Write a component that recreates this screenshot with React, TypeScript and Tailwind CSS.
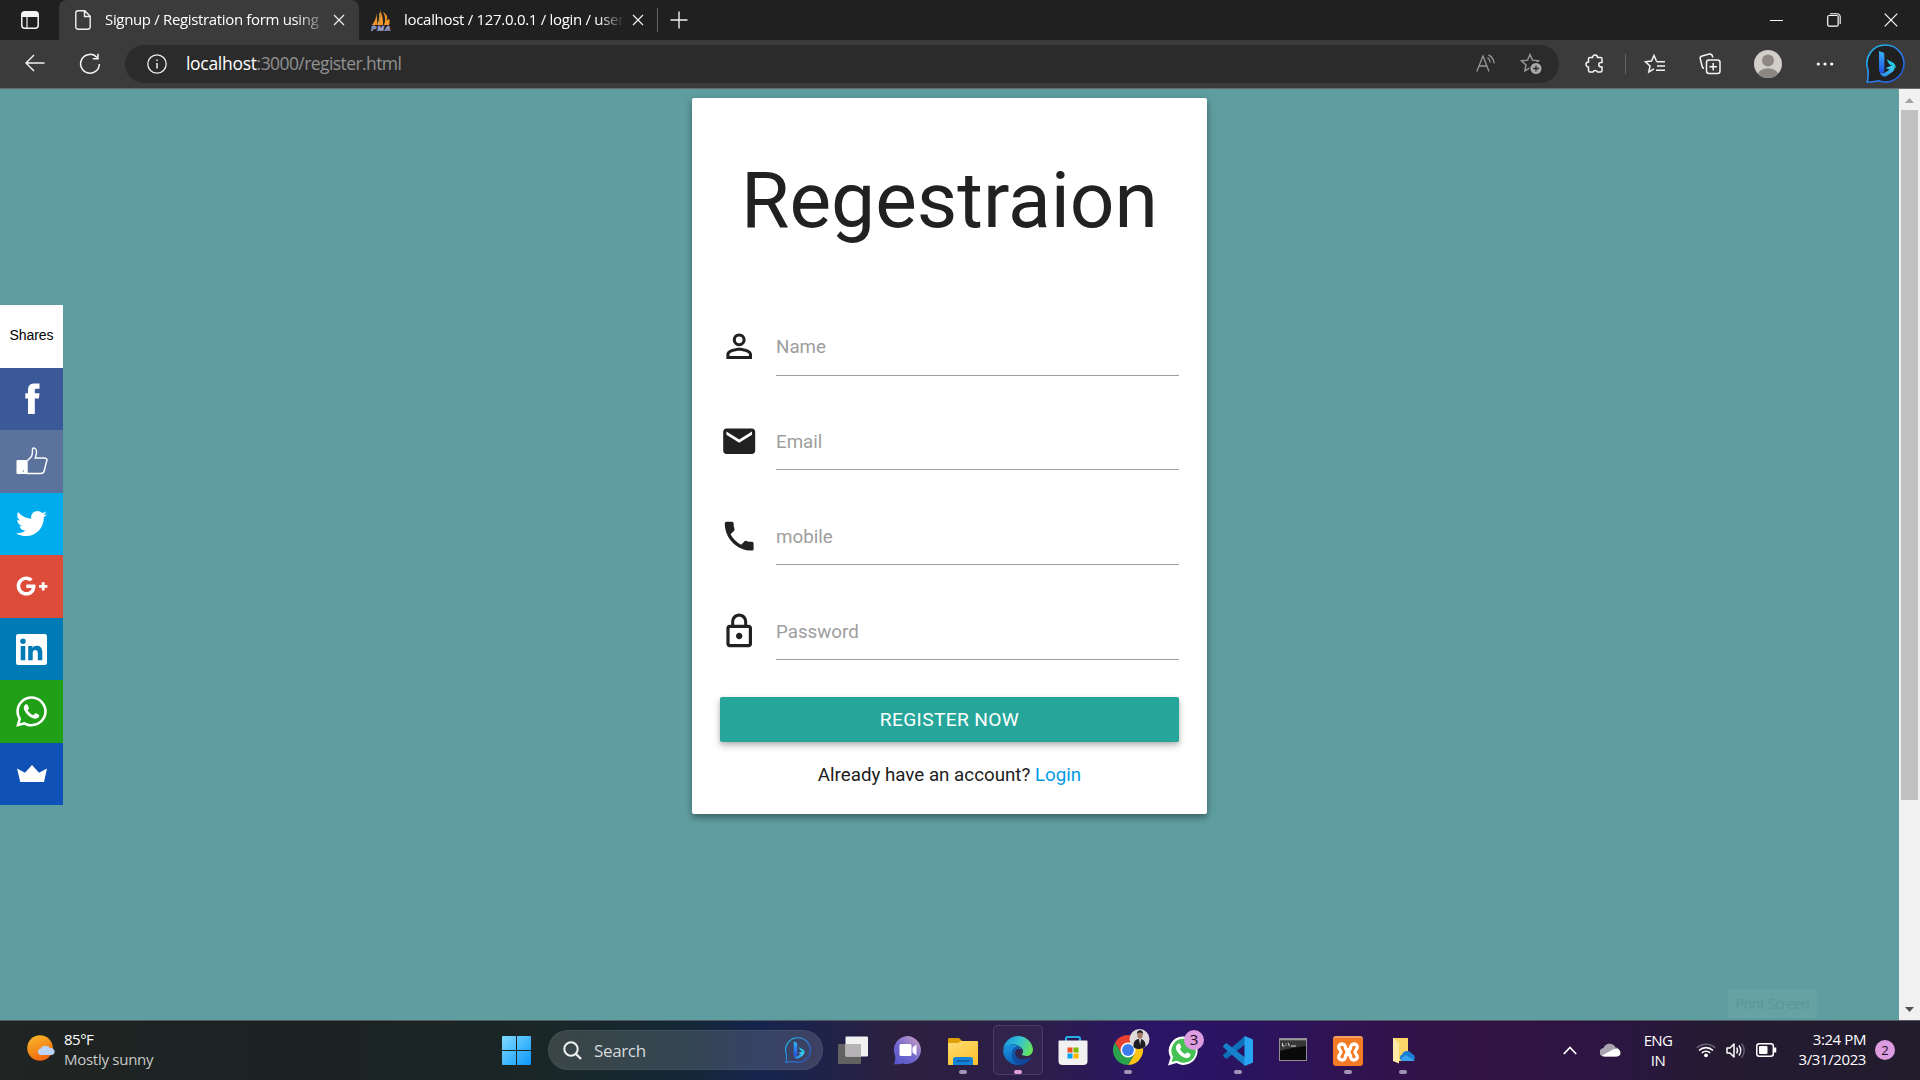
import React from "react";
import { FaTwitter, FaGooglePlusG, FaWhatsapp } from "react-icons/fa";

const UI = "font-['Open_Sans','Noto_Sans',sans-serif]";

function BingMark({ id, size, fill }: { id: string; size: number; fill: string }) {
  return (
    <svg width={size} height={size} viewBox="0 0 38 38" className="shrink-0">
      <defs>
        <linearGradient id={id + "r"} x1="0" y1="0" x2="1" y2="1">
          <stop offset="0" stopColor="#1fc4e8" />
          <stop offset="0.5" stopColor="#2a86ee" />
          <stop offset="1" stopColor="#1d4fd0" />
        </linearGradient>
        <linearGradient id={id + "b"} x1="0" y1="0" x2="0" y2="1">
          <stop offset="0" stopColor="#37b4f4" />
          <stop offset="1" stopColor="#1f4fe6" />
        </linearGradient>
        <linearGradient id={id + "c"} x1="0" y1="1" x2="1" y2="0">
          <stop offset="0" stopColor="#2b7bf0" />
          <stop offset="1" stopColor="#3ee0ee" />
        </linearGradient>
      </defs>
      <path d="M19 1A18 18 0 1 1 12.500 35.800C9 36.600 5 37 1 37C2.600 33.500 2.400 30.500 1.900 25A18 18 0 0 1 19 1Z" fill={fill} stroke={`url(#${id}r)`} strokeWidth="1.600" />
      <path d="M19 23.500l8-3.200c1.600 2.400.8 5.600-1.600 7.300l-5.400 3.500c-2 1.300-6 .3-6.400-3.300l3.200.6c.8 0 1.500-.3 2.200-.8l4-2.600z" fill={`url(#${id}c)`} />
      <path d="M12.700 6.700l4 1.500c.7.3 1.200.9 1.200 1.700V25c0 2-1 3.400-2.600 3.400s-2.600-1.400-2.600-3.200z" fill={`url(#${id}b)`} />
      <path d="M20 14.800l5.800 3c2.300 1.200 3.600 3.600 3.200 6.200-.6-1.300-1.300-2-2.300-2.400l-3.200-1.500c-.7-.3-1.200-.8-1.500-1.500z" fill="#22c6e8" />
    </svg>
  );
}

function CloseX() {
  return (
    <svg width="12" height="12" viewBox="0 0 12 12" className="shrink-0">
      <path d="M1 1l10 10M11 1L1 11" stroke="#f0f0f0" strokeWidth="1.200" fill="none" />
    </svg>
  );
}

function TabStrip() {
  return (
    <div className="flex h-10 items-stretch bg-[#202020]">
      <div className="flex w-[59px] items-center">
        <svg width="18" height="18" viewBox="0 0 18 18" className="ml-[21px]">
          <rect x="0.800" y="0.800" width="16.400" height="16.400" rx="3" fill="none" stroke="#f4f4f4" strokeWidth="1.500" />
          <path d="M1 5V3a2 2 0 0 1 2-2h12a2 2 0 0 1 2 2v3H1z" fill="#f4f4f4" />
          <path d="M6 6v11" stroke="#f4f4f4" strokeWidth="1.200" />
        </svg>
      </div>
      <div className="flex w-[300px] items-center rounded-t-[8px] bg-[#3b3b3b]">
        <svg width="16" height="20" viewBox="0 0 16 20" className="ml-4 shrink-0">
          <path d="M3 .8h6.800l5.400 5.400V17a2.200 2.200 0 0 1-2.200 2.200H3A2.200 2.200 0 0 1 .8 17V3A2.200 2.200 0 0 1 3 .8zM9.500 1v5.500H15" fill="none" stroke="#f0f0f0" strokeWidth="1.400" />
        </svg>
        <div className="mb-[2px] ml-[14px] w-[220px] whitespace-nowrap text-[15px] leading-5 tracking-[-0.34px] text-white [mask-image:linear-gradient(to_right,black_190px,transparent_224px)]">
          Signup / Registration form using
        </div>
        <div className="ml-[8px] flex"><CloseX /></div>
      </div>
      <div className="flex w-[298px] items-center">
        <svg width="20" height="21" viewBox="0 0 20 21" className="ml-[12px] shrink-0">
          <path d="M5.500 3C5.500 8 3.500 12 1 15h5.500zM9 0c.8 6 .2 11-2.500 15H12C12.300 10 11.500 5 9 0zM12 2c2.500 4 2.800 8 1 13h5c.8-2 .8-4 .2-6l-3 1.500C17.500 7 15.500 4 12 2z" fill="#f3962a" />
          <path d="M8.700 3c0 5-.5 8-1.500 11" stroke="#fbc65a" strokeWidth="0.800" fill="none" />
          <text x="0" y="20.500" fontSize="8" fontWeight="700" fontStyle="italic" fontFamily="Liberation Sans" fill="#4b5590" stroke="#b9bee0" strokeWidth="0.500" textLength="19.500">PMA</text>
        </svg>
        <div className="mb-[2px] ml-[13px] w-[230px] whitespace-nowrap text-[15px] leading-5 tracking-[-0.3px] text-white [mask-image:linear-gradient(to_right,black_195px,transparent_220px)]">
          localhost / 127.0.0.1 / login / user
        </div>
        <div className="-ml-[2px] flex"><CloseX /></div>
      </div>
      <div className="mt-2 h-6 w-px bg-[#636363]" />
      <svg width="18" height="18" viewBox="0 0 18 18" className="ml-[12px] mt-[11px]">
        <path d="M9 .5v17M.5 9h17" stroke="#f0f0f0" strokeWidth="1.400" />
      </svg>
      <div className="ml-auto flex items-center pr-[22px]">
        <div className="h-px w-[13px] bg-white" />
        <svg width="14" height="14" viewBox="0 0 14 14" className="ml-[44px]">
          <rect x="0.700" y="2.500" width="10.500" height="10.700" rx="1.500" fill="none" stroke="#fff" strokeWidth="1.200" />
          <path d="M3 .8h7a3 3 0 0 1 3.200 3V11" fill="none" stroke="#fff" strokeWidth="1.100" />
        </svg>
        <svg width="14" height="14" viewBox="0 0 14 14" className="ml-[43px]">
          <path d="M.7.700l12.600 12.600M13.300.700L.7 13.300" stroke="#fff" strokeWidth="1.200" />
        </svg>
      </div>
    </div>
  );
}

const STAR = "M10 1.500l2.500 5.600 6 .7-4.500 4.100 1.200 6L10 14.900 4.800 17.900 6 11.900 1.500 7.800l6-.7z";

function AddressBar() {
  return (
    <div className="flex h-[49px] items-center border-b border-[#6a6a6a] bg-[#3b3b3b]">
      <svg width="20" height="18" viewBox="0 0 20 18" className="mb-[2px] ml-[25px]">
        <path d="M19.500 9H1M9 1L1 9l8 8" fill="none" stroke="#f4f4f4" strokeWidth="1.400" />
      </svg>
      <svg width="22" height="22" viewBox="0 0 22 22" className="mb-[1px] ml-[34px]">
        <path d="M18 4.500A9.400 9.400 0 1 0 20.400 11M19 .8v5h-5.200" fill="none" stroke="#f4f4f4" strokeWidth="1.500" />
      </svg>
      <div className="ml-[24px] flex h-[38px] w-[1434px] items-center rounded-full bg-[#2b2b2b]">
        <svg width="20" height="20" viewBox="0 0 20 20" className="ml-[22px]">
          <circle cx="10" cy="10" r="9.200" fill="none" stroke="#f0f0f0" strokeWidth="1.300" />
          <path d="M10 9v5.500M10 5.500v1.600" stroke="#f0f0f0" strokeWidth="1.500" />
        </svg>
        <div className="mb-[2px] ml-[19px] whitespace-nowrap text-[17.5px] leading-6 tracking-[-0.58px] text-[#929292]">
          <span className="tracking-[-0.3px] text-white">localhost</span>:3000/register.html
        </div>
        <svg width="20" height="18" viewBox="0 0 20 18" className="mb-[2px] ml-auto">
          <path d="M.8 17.500L7 2l6 15.500M3 12h8M11.500 3.500q2.500 1.800 2.800 5M12.500.8q5 2.500 5.700 8.500" fill="none" stroke="#989898" strokeWidth="1.300" />
        </svg>
        <svg width="22" height="22" viewBox="0 0 22 22" className="ml-[24px] mr-[17px]">
          <path d={STAR} fill="none" stroke="#989898" strokeWidth="1.400" />
          <circle cx="16" cy="15.500" r="6.600" fill="#2b2b2b" />
          <circle cx="16" cy="15.500" r="5.500" fill="#a8a8a8" />
          <path d="M16 12.500v6M13 15.500h6" stroke="#2b2b2b" strokeWidth="1.300" />
        </svg>
      </div>
      <svg width="20" height="20" viewBox="0 0 20 20" className="mb-[1px] ml-[25px]">
        <path d="M6 3.500H8.500a2.500 2.500 0 0 1 5 0h3A1.500 1.500 0 0 1 18 5v3.500h-1a2.200 2.200 0 0 0 0 4.400h1v3.600A1.500 1.500 0 0 1 16.500 18H13.500a2.500 2.500 0 0 0-4.500 0H6A1.500 1.500 0 0 1 4.500 16.500V13a2.300 2.300 0 0 1 0-5V5A1.500 1.500 0 0 1 6 3.500z" fill="none" stroke="#f4f4f4" strokeWidth="1.500" />
      </svg>
      <div className="ml-[21px] h-5 w-px bg-[#636363]" />
      <svg width="22" height="20" viewBox="0 0 22 20" className="mb-[1px] ml-[18px]">
        <path d="M12.500 7.200L10 1.500 7.500 7.100l-6 .7L6 11.900l-1.200 6L10 14.900M12.500 7.800H21M13 12H21M12 16.200h9" fill="none" stroke="#f4f4f4" strokeWidth="1.500" />
      </svg>
      <svg width="22" height="22" viewBox="0 0 22 22" className="mb-[1px] ml-[33px]">
        <rect x="7.500" y="7" width="13.500" height="13.500" rx="2.500" fill="none" stroke="#f4f4f4" strokeWidth="1.500" />
        <path d="M14.200 10v7.500M10.500 13.700H18M5 15.500C3.500 15 3.200 14 3 13L1.200 5.500A2.200 2.200 0 0 1 3 3l7.500-2C12.500.7 13.300 1.500 13.800 4.500" fill="none" stroke="#f4f4f4" strokeWidth="1.500" />
      </svg>
      <svg width="28" height="28" viewBox="0 0 28 28" className="ml-[33px]">
        <defs><clipPath id="avatar"><circle cx="14" cy="14" r="14" /></clipPath></defs>
        <g clipPath="url(#avatar)">
          <rect width="28" height="28" fill="#d2cfcb" />
          <circle cx="14" cy="10.500" r="6" fill="#8d8783" />
          <ellipse cx="14" cy="25" rx="10.500" ry="6.800" fill="#8d8783" />
        </g>
      </svg>
      <svg width="18" height="4" viewBox="0 0 18 4" className="mb-[1px] ml-[34px]">
        <circle cx="2.300" cy="2" r="1.600" fill="#fff" /><circle cx="9" cy="2" r="1.600" fill="#fff" /><circle cx="15.700" cy="2" r="1.600" fill="#fff" />
      </svg>
      <div className="mb-[1px] ml-[32px] flex"><BingMark id="tb" size={39} fill="#202020" /></div>
    </div>
  );
}

function ShareBar() {
  const cell = "flex h-[62.5px] w-[63px] items-center justify-center text-white ";
  return (
    <div className="mt-[216px] h-[500px] w-[63px]">
      <div className="flex h-[62.5px] items-center justify-center bg-white pb-[2px] font-['Liberation_Sans',sans-serif] text-[14px] tracking-[-0.1px] text-black">Shares</div>
      <div className={cell + "bg-[#3b5998] pl-[1px]"}>
        <svg width="15" height="31" viewBox="0 0 15 31">
          <path d="M3 31V15.500H.3V10.200H3V7C3 2.500 5.500.5 9.500.5h5v5.300h-3c-1.300 0-1.700.6-1.700 1.800v2.600h4.700l-.6 5.300H9.800V31z" fill="#fff" />
        </svg>
      </div>
      <div className={cell + "bg-[#5b739c]"}>
        <svg width="32" height="28" viewBox="0 0 32 28">
          <rect x="0.500" y="13" width="10.500" height="14" rx="1" fill="#fff" />
          <circle cx="7.300" cy="24" r="0.700" fill="#5b739c" />
          <path d="M11 14l4.500-4.500c1-2 1-4.500 1-7.500 0-1.500 3.500-1.500 4 2 .3 2.500-.5 4.500-1.300 7h9c3 0 3.300 2 2.300 3.600l-2.300 9.400c-.5 2-1.500 2.500-3.500 2.500H11z" fill="none" stroke="#fff" strokeWidth="1.400" />
        </svg>
      </div>
      <div className={cell + "bg-[#00aced]"}><FaTwitter size={31} /></div>
      <div className={cell + "bg-[#dd4b39] pb-[1px]"}><FaGooglePlusG size={32} /></div>
      <div className={cell + "bg-[#007bb6] pt-[1px]"}>
        <svg width="31" height="31" viewBox="0 0 31 31">
          <rect width="31" height="31" rx="2.300" fill="#fff" />
          <g fill="#007bb6">
            <circle cx="7" cy="7.300" r="2.700" />
            <path d="M4.700 12h4.600v14.300H4.700zM12.200 12h4.300v2c2-3.600 9.800-3.500 9.800 4v8.300h-4.500v-7c0-4.500-5.100-4.300-5.100 0v7h-4.500z" />
          </g>
        </svg>
      </div>
      <div className={cell + "bg-[#20a016]"}><FaWhatsapp size={35} /></div>
      <div className={cell + "bg-[#1051b8] pb-[1px]"}>
        <svg width="30" height="17" viewBox="0 0 30 17">
          <path d="M0 3.500l8 4.300L15 0l7 7.800 8-4.300L27 17H3.300z" fill="#fff" />
        </svg>
      </div>
    </div>
  );
}

const FIELDS = [
  { label: "Name", h: "h-[59px]", d: "M12 5.900a2.100 2.100 0 1 1 0 4.200 2.100 2.100 0 0 1 0-4.200m0 9c2.970 0 6.100 1.460 6.100 2.100v1.100H5.900V17c0-.64 3.130-2.100 6.100-2.100M12 4C9.790 4 8 5.790 8 8s1.790 4 4 4 4-1.790 4-4-1.790-4-4-4zm0 9c-2.670 0-8 1.340-8 4v3h16v-3c0-2.660-5.330-4-8-4z" },
  { label: "Email", h: "h-[58px]", d: "M20 4H4c-1.100 0-1.990.9-1.990 2L2 18c0 1.100.9 2 2 2h16c1.100 0 2-.9 2-2V6c0-1.100-.9-2-2-2zm0 4l-8 5-8-5V6l8 5 8-5v2z" },
  { label: "mobile", h: "h-[58px]", d: "M6.620 10.790c1.440 2.830 3.760 5.140 6.590 6.590l2.200-2.200c.27-.27.67-.36 1.020-.24 1.120.37 2.330.57 3.570.57.55 0 1 .45 1 1V20c0 .55-.45 1-1 1-9.390 0-17-7.610-17-17 0-.55.45-1 1-1h3.500c.55 0 1 .45 1 1 0 1.250.2 2.450.57 3.570.11.35.03.74-.25 1.020l-2.200 2.200z" },
  { label: "Password", h: "h-[58px]", d: "M12 17c1.100 0 2-.9 2-2s-.9-2-2-2-2 .9-2 2 .9 2 2 2zm6-9h-1V6c0-2.760-2.240-5-5-5S7 3.240 7 6v2H6c-1.100 0-2 .9-2 2v10c0 1.100.9 2 2 2h12c1.100 0 2-.9 2-2V10c0-1.100-.9-2-2-2zM8.900 6c0-1.710 1.390-3.100 3.100-3.100s3.100 1.390 3.100 3.100v2H8.900V6zM18 20H6V10h12v10z" },
];

function RegisterCard() {
  return (
    <div className="mt-[9px] h-[716px] w-[515px] rounded-[2px] bg-white px-7 font-[Roboto,sans-serif] text-[#212121] shadow-[0_5px_6px_0_rgba(0,0,0,0.14),0_1px_12px_0_rgba(0,0,0,0.12),0_3px_6px_-1px_rgba(0,0,0,0.2)]">
      <h1 className="h-[201px] pt-[58px] text-center text-[78.5px] leading-[88px]">Regestraion</h1>
      {FIELDS.map((f) => (
        <div key={f.label} className="flex h-[95px]">
          <svg width="38.400" height="38.400" viewBox="0 0 24 24" className="mt-[28px] shrink-0" fill="#212121" fillRule="evenodd">
            <path d={f.d} />
          </svg>
          <div className={"ml-auto mt-[18px] w-[403px] border-b border-[#9e9e9e] pt-[18px] text-[18.75px] leading-6 text-[#9e9e9e] " + f.h}>{f.label}</div>
        </div>
      ))}
      <div className="mt-[18px] flex h-[45px] items-center justify-center rounded-[2px] bg-[#26a69a] pt-[1px] text-[19.2px] tracking-[0.35px] text-white shadow-[0_2px_4px_0_rgba(0,0,0,0.18),0_4px_8px_0_rgba(0,0,0,0.18)]">REGISTER NOW</div>
      <p className="mt-[21px] text-center text-[18.75px] leading-6">Already have an account? <span className="text-[#039be5]">Login</span></p>
    </div>
  );
}

function Slot({ children, dot = "", active = false }: { children: React.ReactNode; dot?: string; active?: boolean }) {
  return (
    <div className="flex w-[55px] justify-center">
      <div className={"flex h-[50px] w-[50px] flex-col items-center rounded-[5px] border pt-[9px] " + (active ? "border-white/12 bg-white/3" : "border-transparent")}>
        <div className="flex h-[31px] w-[31px] items-center justify-center">{children}</div>
        {dot && <div className={"mt-[4px] h-1 w-2 rounded-full " + dot} />}
      </div>
    </div>
  );
}

function Apps() {
  const grey = "bg-[#a294b5]";
  return (
    <>
      <Slot>
        <svg width="30" height="28" viewBox="0 0 30 28" className="mb-[1px]">
          <rect x="0" y="8" width="23" height="20" rx="1" fill="#626262" />
          <rect x="7.500" y="0.500" width="22.500" height="20" rx="1" fill="#f1f1f1" />
          <rect x="7.500" y="8" width="15.500" height="12.500" fill="#b5b3b5" />
        </svg>
      </Slot>
      <Slot>
        <svg width="30" height="29" viewBox="0 0 30 29">
          <defs><linearGradient id="chat" x1="0" y1="1" x2="0.800" y2="0"><stop offset="0" stopColor="#5355cc" /><stop offset="0.500" stopColor="#7268cf" /><stop offset="1" stopColor="#c39ac6" /></linearGradient></defs>
          <path d="M15 0a14 14 0 1 1-5 27.400C6 28.500 3 28 .8 28.500 2 26 2.500 24 2.200 20A14 14 0 0 1 15 0z" fill="url(#chat)" />
          <rect x="6.500" y="8" width="12" height="12" rx="1.500" fill="#fff" />
          <path d="M19.500 11.500l4-3v11l-4-3z" fill="#fff" />
        </svg>
      </Slot>
      <Slot dot={grey}>
        <svg width="30" height="28" viewBox="0 0 30 28">
          <defs><linearGradient id="fold" x1="0" y1="0" x2="0.600" y2="1"><stop offset="0" stopColor="#ffdd75" /><stop offset="1" stopColor="#fdc22f" /></linearGradient></defs>
          <path d="M0 2.500C0 1.500.7 1 1.500 1H11l3 3-2 3H0z" fill="#dfa007" />
          <path d="M0 6h10l3-2h16c.6 0 1 .4 1 1v22c0 .6-.4 1-1 1H1c-.6 0-1-.4-1-1z" fill="url(#fold)" />
          <path d="M5 28v-5.500a2.500 2.500 0 0 1 2.500-2.500h15a2.500 2.500 0 0 1 2.500 2.500V28z" fill="#1284d8" />
          <path d="M8.500 24h13" stroke="#0b4f90" strokeWidth="1.300" />
        </svg>
      </Slot>
      <Slot dot="bg-[#dd9be0]" active>
        <svg width="30" height="30" viewBox="0 0 30 30">
          <defs>
            <linearGradient id="e1" x1="0" y1="0.300" x2="1" y2="0.600"><stop offset="0" stopColor="#1a96da" /><stop offset="0.500" stopColor="#35c3d6" /><stop offset="1" stopColor="#67e356" /></linearGradient>
            <linearGradient id="e2" x1="0" y1="0" x2="0.500" y2="1"><stop offset="0" stopColor="#1b9be2" /><stop offset="1" stopColor="#0c59b5" /></linearGradient>
          </defs>
          <path d="M15 0a15 15 0 0 1 15 13c0 4.500-3 7-6.500 7-3 0-5-1-4.500-2 1.500-2 1.500-4-.5-6-5-5-13-5-18.300 1A15 15 0 0 1 15 0z" fill="url(#e1)" />
          <path d="M0 15C2 8.500 8 7 13 9c3 1.200 5 3 6 5-4-3-7 0-7 3 0 6 8 9 16 4.500A15 15 0 0 1 0 15z" fill="url(#e2)" />
          <path d="M15 10.500c-9 1-8 15.500 2 19.300 5-.7 9-3.300 11-8.300-8 4.500-16 1.500-16-4.500 0-3 2-5 5-4.500z" fill="#123f91" opacity="0.650" />
        </svg>
      </Slot>
      <Slot>
        <svg width="30" height="29" viewBox="0 0 30 29">
          <path d="M8 6V2.500C8 1.500 8.500 1 9.500 1h11c1 0 1.500.5 1.500 1.500V6" fill="none" stroke="#29aee6" strokeWidth="2" />
          <path d="M.5 5.500c0-.6.400-1 1-1h27c.6 0 1 .4 1 1V25a4 4 0 0 1-4 4h-21a4 4 0 0 1-4-4z" fill="#f1f1f2" />
          <path d="M9.500 11.500h5v5h-5z" fill="#f04e24" /><path d="M15.500 11.500h5v5h-5z" fill="#7fb900" /><path d="M9.500 17.500h5v5h-5z" fill="#00a3ee" /><path d="M15.500 17.500h5v5h-5z" fill="#ffb800" />
        </svg>
      </Slot>
      <Slot dot={grey}>
        <svg width="38" height="38" viewBox="0 0 38 38" className="mb-[7px] ml-[7px] shrink-0">
          <path d="M2 14.500A15 15 0 0 1 28 14.500H15L8.500 25.750z" fill="#e8412f" />
          <path d="M28 14.500A15 15 0 0 1 15 37L21.500 25.750 15 14.500z" fill="#fdc413" />
          <path d="M15 37A15 15 0 0 1 2 14.500L8.500 25.750h13z" fill="#2ba24c" />
          <circle cx="15" cy="22" r="7.500" fill="#fff" /><circle cx="15" cy="22" r="5.900" fill="#3b7ded" />
          <circle cx="26.500" cy="11" r="10" fill="#dfdcdb" />
          <path d="M20.500 19c0-5 1-7 4.500-8h3c3.500 1 4.500 3 4.500 7.500-3 3-9 3.500-12 .5z" fill="#1d1e22" />
          <path d="M26 11h2l-.8 6z" fill="#e8e4e4" />
          <ellipse cx="27" cy="6.800" rx="2.700" ry="4" fill="#a67b68" />
          <path d="M24 6c-.5-5 6.500-5 6 0-1-2-5-2-6 0z" fill="#1d1e22" />
        </svg>
      </Slot>
      <Slot>
        <div className="relative">
          <svg width="30" height="30" viewBox="0 0 30 30">
            <path d="M15.500.500a14.200 14.200 0 1 1-7 26.600L0 29.500l2.500-8A14.200 14.200 0 0 1 15.500.500z" fill="#fff" />
            <path d="M15.500 2.800a12 12 0 1 1-6.300 22L3.600 26l1.500-5.200A12 12 0 0 1 15.500 2.800z" fill="#45c153" />
            <path d="M10 7.800c.8-.6 1.800-.5 2.200.5l1 2.400c.3 1-.9 1.700-1.200 2.500 1.200 2.300 3 3.900 5.300 4.800.8-.5 1.400-1.900 2.300-1.500l2.500 1.200c1.400 1-.4 4.300-3.200 4.300C14 22 7.500 15.500 8 11.500c.1-1.500.8-2.800 2-3.700z" fill="#fff" />
          </svg>
          <div className="absolute -top-[6px] left-[16px] flex h-5 w-5 items-center justify-center rounded-full bg-[#dd9be0] pb-[1px] text-[15px] leading-5 text-[#1b1020]">3</div>
        </div>
      </Slot>
      <Slot dot={grey}>
        <svg width="30" height="30" viewBox="0 0 30 30">
          <path d="M22 0v8.500L4 22.500c-.5.400-1 .3-1.500 0l-2-2c-.6-.6-.6-1.300 0-1.900z" fill="#0f6fb8" />
          <path d="M22 30v-8.500L4 7.500c-.5-.4-1-.3-1.500 0l-2 2c-.6.6-.6 1.300 0 1.900z" fill="#1682cc" />
          <path d="M21.500 0L29 3c.6.300 1 .8 1 1.500v21c0 .7-.4 1.200-1 1.500l-7.500 3z" fill="#27a5f0" />
        </svg>
      </Slot>
      <Slot>
        <svg width="28" height="23" viewBox="0 0 28 23" className="mb-[2px]">
          <rect x="0.500" y="0.500" width="27" height="22" fill="#0a0a0a" stroke="#8f8f95" strokeWidth="1" />
          <path d="M1 1h26v1.500H1z" fill="#9a9aa0" />
          <path d="M1 3h26v5q-13 1-26 5z" fill="#38383a" />
          <path d="M3.500 5v3h2M7 5.500v.8M7 7.200v.8M9 4.800l1.500 3.400M12 8h5" stroke="#ddd" strokeWidth="1" fill="none" />
        </svg>
      </Slot>
      <Slot dot={grey}>
        <div className="flex h-[30px] w-[30px] items-center justify-center rounded-[3px] border-t-2 border-[#f3a263] bg-[#f47a25]">
          <svg width="24" height="22" viewBox="0 0 24 22">
            <path d="M9.500 7.500C9.500 4.500 8 3 6 3 3.500 3 2.300 4.800 2.800 6.800 3.200 8.500 5 9.500 5 11s-1.800 2.500-2.200 4.200C2.300 17.200 3.500 19 6 19c2 0 3.500-1.500 3.500-4.500M14.500 7.500C14.500 4.500 16 3 18 3c2.500 0 3.700 1.800 3.200 3.800C20.800 8.500 19 9.500 19 11s1.800 2.500 2.200 4.200c.5 2-.7 3.800-3.200 3.800-2 0-3.500-1.500-3.500-4.500M9.500 7.500q2.500 2 5 0M9.500 14.500q2.500-2 5 0" fill="none" stroke="#fff" strokeWidth="3.300" strokeLinejoin="round" strokeLinecap="round" />
            <path d="M9 11h6" stroke="#fff" strokeWidth="5" />
            <path d="M6 7.500l2.500 3.500L6 14.500" fill="none" stroke="#f47a25" strokeWidth="1.800" />
            <path d="M18 7.500L15.500 11l2.500 3.500" fill="none" stroke="#f47a25" strokeWidth="1.800" />
          </svg>
        </div>
      </Slot>
      <Slot dot={grey}>
        <svg width="24" height="27" viewBox="0 0 24 27" className="ml-[2px]">
          <path d="M1 1h15v23H1z" fill="#fbd566" /><path d="M1 1l6 5v20.500L1 24z" fill="#ffe9a6" />
          <path d="M10 24a3.500 3.500 0 0 1 0-6.500 5.500 5.500 0 0 1 10-.5 3.800 3.800 0 0 1 1 7z" fill="#1b7fd6" />
          <path d="M8.500 22l5-4 9 5.500c-.6.400-1 .5-2 .5H11z" fill="#3ba2f0" />
        </svg>
      </Slot>
    </>
  );
}

function Taskbar() {
  return (
    <div className="flex h-[60px] items-start border-t border-[#54585f] bg-[linear-gradient(90deg,#202423_0px,#1b2322_300px,#1a2726_540px,#142838_690px,#16254e_760px,#202248_830px,#2c203f_900px,#2b1d4a_1040px,#2a1566_1150px,#2b1362_1230px,#31134a_1400px,#321344_1480px,#2c1543_1600px,#241b31_1720px,#221c2d_1920px)] pt-1">
      <div className="flex w-[502px] pl-[27px] pt-[4px]">
        <svg width="29" height="28" viewBox="0 0 29 28" className="mt-[5px]">
          <defs><linearGradient id="sun" x1="0.200" y1="0" x2="0.600" y2="1"><stop offset="0" stopColor="#f8b72a" /><stop offset="1" stopColor="#f1650f" /></linearGradient></defs>
          <circle cx="13" cy="14" r="12.800" fill="url(#sun)" />
          <path d="M13.500 21a3.200 3.200 0 0 1 0-6.300 5.500 5.500 0 0 1 9.500-.5 3.500 3.500 0 0 1 2 6.800z" fill="#bcd3f8" />
        </svg>
        <div className="ml-[8px] text-[15px] leading-[20px] tracking-[-0.27px]">
          <div className="tracking-[-0.5px] text-white">85°F</div>
          <div className="text-[#c8cbca]">Mostly sunny</div>
        </div>
      </div>
      <svg width="29" height="29" viewBox="0 0 29 29" className="mt-[11px] shrink-0">
        <defs><linearGradient id="win" x1="0" y1="0" x2="1" y2="1"><stop offset="0" stopColor="#7fdcff" /><stop offset="1" stopColor="#0b96fb" /></linearGradient></defs>
        <path d="M0 1a1 1 0 0 1 1-1h13v14H0zM15 0h13a1 1 0 0 1 1 1v13H15zM0 15h14v14H1a1 1 0 0 1-1-1zM15 15h14v13a1 1 0 0 1-1 1H15z" fill="url(#win)" />
      </svg>
      <div className="ml-[17px] mt-[5px] flex h-10 w-[275px] shrink-0 items-center rounded-full border border-white/5 bg-white/14 pl-[14px] pr-[11px]">
        <svg width="19" height="19" viewBox="0 0 19 19">
          <circle cx="8" cy="8" r="6.700" fill="none" stroke="#f1f1f1" strokeWidth="2" /><path d="M13 13l5 5" stroke="#f1f1f1" strokeWidth="2.400" />
        </svg>
        <div className="ml-[12px] mt-[2px] text-[17px] leading-6 tracking-[-0.35px] text-[#d5d9dc]">Search</div>
        <div className="ml-auto flex"><BingMark id="sb" size={26} fill="transparent" /></div>
      </div>
      <div className="ml-[2.500px] flex shrink-0"><Apps /></div>
      <div className="ml-auto flex h-[50px] items-center pr-[24px] text-[15px] leading-[20px] text-white">
        <svg width="14" height="9" viewBox="0 0 14 9"><path d="M.8 8L7 1.500 13.200 8" fill="none" stroke="#fff" strokeWidth="1.700" /></svg>
        <svg width="21" height="14" viewBox="0 0 21 14" className="ml-[23px]">
          <path d="M4 13.500A4 4 0 0 1 3.500 5 6.500 6.500 0 0 1 15.500 4.500 4.600 4.600 0 0 1 16.500 13.500z" fill="#aaa3b0" />
          <path d="M2 12.500L13 6.500c4-2 7.500 0 7.500 3.500 0 2-1.500 3.500-4 3.500H4z" fill="#fff" />
        </svg>
        <div className="mb-[1px] ml-[22px] w-[30px] text-center tracking-[-0.6px]">ENG<br />IN</div>
        <svg width="20" height="16" viewBox="0 0 20 16" className="ml-[23px]">
          <path d="M.8 6a13 13 0 0 1 18.400 0" fill="none" stroke="#6a6275" strokeWidth="1.500" />
          <path d="M3 8.500a10 10 0 0 1 14 0M5.800 11a6 6 0 0 1 8.400 0" fill="none" stroke="#fff" strokeWidth="1.600" /><circle cx="10" cy="13.300" r="1.900" fill="#fff" />
        </svg>
        <svg width="20" height="17" viewBox="0 0 20 17" className="ml-[10px]">
          <path d="M1 6h3l4-4v13l-4-4H1z" fill="none" stroke="#fff" strokeWidth="1.500" strokeLinejoin="round" />
          <path d="M10.700 5.500q1.800 3 0 6M13 3.500q3.600 5 0 10" fill="none" stroke="#fff" strokeWidth="1.400" /><path d="M15.500 1.500q5.500 7 0 14" fill="none" stroke="#6a6275" strokeWidth="1.300" />
        </svg>
        <svg width="21" height="14" viewBox="0 0 21 14" className="ml-[10px]">
          <rect x="0.800" y="0.800" width="16.500" height="12.400" rx="2.500" fill="none" stroke="#fff" strokeWidth="1.500" /><rect x="3" y="3" width="8.500" height="8" rx="1" fill="#fff" /><path d="M19 4.500v5" stroke="#fff" strokeWidth="2.500" />
        </svg>
        <div className="mb-[2px] ml-[16px] w-[73px] whitespace-nowrap text-right tracking-[-0.4px]">3:24 PM<br />3/31/2023</div>
        <div className="ml-[9px] mr-[1px] flex h-5 w-5 items-center justify-center rounded-full bg-[#dd9be0] pb-[1px] text-[13px] leading-5 text-[#1b1020]">2</div>
      </div>
    </div>
  );
}

export default function App() {
  return (
    <div className={"flex h-[1080px] w-[1920px] flex-col overflow-hidden bg-[#5f9ea0] " + UI}>
      <TabStrip />
      <AddressBar />
      <main className="flex h-[931px]">
        <div className="relative flex flex-1 justify-between">
          <ShareBar />
          <RegisterCard />
          <div className="w-[63px]" />
          <div className="absolute bottom-[2px] right-[82px] flex h-[29px] w-[89px] items-center justify-center whitespace-nowrap bg-[#66a1a3] text-[14px] tracking-[-0.45px] text-[#5a9799]">Print Screen</div>
        </div>
        <div className="flex w-[21px] flex-col items-center bg-[#f1f1f1]">
          <svg width="9" height="5" viewBox="0 0 9 5" className="mt-[9px]"><path d="M4.500 0L9 5H0z" fill="#a3a3a3" /></svg>
          <div className="mt-[7px] h-[690px] w-[17px] bg-[#c1c1c1]" />
          <svg width="9" height="5" viewBox="0 0 9 5" className="mb-[8px] mt-auto"><path d="M0 0h9L4.500 5z" fill="#505050" /></svg>
        </div>
      </main>
      <Taskbar />
    </div>
  );
}
